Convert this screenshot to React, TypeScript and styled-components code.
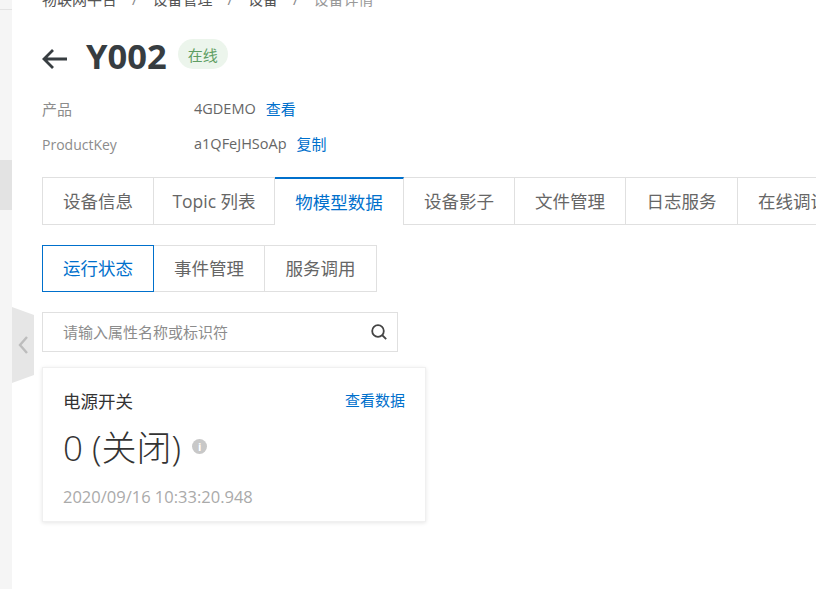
import styled, { createGlobalStyle } from "styled-components"

const FONT = `"Open Sans", "Noto Sans CJK SC", sans-serif`

const GlobalStyle = createGlobalStyle`
  html, body {
    margin: 0;
    height: 100%;
    overflow: hidden;
    background: #fff;
    font-family: ${FONT};
  }
  * { box-sizing: border-box; }
`

interface TabProps {
  $width: number;
  $first?: boolean;
  $active?: boolean;
}

const Page = styled.div`
  position: relative;
  display: flex;
  width: 816px;
  height: 589px;
  overflow: hidden;
`
const Sidebar = styled.div`
  flex: 0 0 12px;
  background: #f5f5f5;
  display: flex;
  flex-direction: column;
`
const SideLine = styled.div`
  height: 10px;
  border-bottom: 1px solid #e3e3e3;
  margin-bottom: 150px;
`
const SideActive = styled.div`
  height: 50px;
  background: #e3e3e3;
`
const Handle = styled.div`
  position: absolute;
  left: 12px;
  top: 307px;
  width: 22px;
  height: 76px;
  background: #e6e6e6;
  clip-path: polygon(0 0, 100% 8px, 100% 68px, 0 100%);
  display: flex;
  align-items: center;
  justify-content: center;
  color: #bdbdbd;
`
const Main = styled.div`
  flex: 1;
  min-width: 0;
  padding: 0 0 0 30px;
`
const Breadcrumb = styled.div`
  display: flex;
  height: 9px;
  align-items: flex-end;
  font-size: 15px;
  line-height: 20px;
  color: #555;
`
const Crumb = styled.span<{ $last?: boolean }>`
  color: ${p => (p.$last ? "#999" : "#555")};
  white-space: nowrap;
`
const Slash = styled.span`
  color: #888;
  margin: 0 15px;
`
const TitleRow = styled.div`
  display: flex;
  align-items: center;
  margin-top: 27px;
  height: 40px;
`
const BackIcon = styled.svg`
  width: 26px;
  height: 22px;
  margin-top: 6px;
  color: #373d41;
`
const Title = styled.h1`
  margin: 0 0 0 18px;
  font-size: 34.5px;
  line-height: 40px;
  font-weight: 700;
  color: #373d41;
`
const StatusPill = styled.span`
  margin: -4px 0 0 11px;
  width: 50px;
  height: 30px;
  border-radius: 15px;
  background: #ecf5ec;
  color: #5f9e63;
  font-size: 15px;
  display: flex;
  align-items: center;
  justify-content: center;
`
const Meta = styled.div`
  margin-top: 15px;
  display: grid;
  grid-template-columns: 152px 1fr;
  grid-auto-rows: 35px;
  font-size: 15px;
  align-items: center;
`
const MetaLabel = styled.span<{ $latin?: boolean }>`
  color: #8c8c8c;
  font-size: ${p => (p.$latin ? 14 : 15)}px;
  padding-top: ${p => (p.$latin ? 1 : 0)}px;
`
const MetaValue = styled.span`
  color: #666;
  display: flex;
  align-items: center;
  gap: 10px;
  font-size: 14.5px;
`
const LinkText = styled.span`
  color: #0070cc;
  font-size: 15px;
`
const Tabs = styled.div`
  display: flex;
  margin-top: 16px;
  height: 48px;
`
const Tab = styled.div<TabProps>`
  flex: 0 0 auto;
  width: ${p => p.$width}px;
  height: 48px;
  padding-bottom: 2px;
  border-right: 1px solid #e0e0e0;
  border-left: ${p => (p.$first ? "1px solid #e0e0e0" : "none")};
  border-top: ${p => (p.$active ? "2px solid #0070cc" : "1px solid #e0e0e0")};
  border-bottom: ${p => (p.$active ? "none" : "1px solid #e0e0e0")};
  color: ${p => (p.$active ? "#0070cc" : "#666")};
  font-size: 17.5px;
  display: flex;
  align-items: center;
  justify-content: center;
  white-space: nowrap;
`
const SubTabs = styled.div`
  display: flex;
  margin-top: 20px;
  height: 47px;
`
const SubTab = styled.div<TabProps>`
  width: ${p => p.$width}px;
  padding-bottom: 2px;
  border: 1px solid ${p => (p.$active ? "#0070cc" : "#e0e0e0")};
  border-left: ${p => (p.$active ? "1px solid #0070cc" : "none")};
  color: ${p => (p.$active ? "#0070cc" : "#666")};
  font-size: 17.5px;
  display: flex;
  align-items: center;
  justify-content: center;
`
const Search = styled.div`
  margin-top: 20px;
  width: 356px;
  height: 40px;
  border: 1px solid #e0e0e0;
  display: flex;
  align-items: center;
  justify-content: space-between;
  padding: 0 9px 2px 20px;
  font-size: 15px;
  color: #8c8c8c;
`
const SearchIcon = styled.svg`
  margin-top: 2px;
`
const Card = styled.div`
  margin-top: 15px;
  width: 384px;
  height: 155px;
  background: #fff;
  border: 1px solid #f0f0f0;
  box-shadow: 0 1px 4px rgba(0, 0, 0, 0.1);
  padding: 20px 20px 0 20px;
`
const CardHead = styled.div`
  display: flex;
  justify-content: space-between;
  align-items: center;
  height: 24px;
`
const CardTitle = styled.span`
  font-size: 17.5px;
  color: #333;
`
const CardLink = styled(LinkText)`
  margin-top: -2px;
`
const ValueRow = styled.div`
  display: flex;
  align-items: center;
  margin-top: 11px;
  height: 44px;
  font-size: 35px;
  font-weight: 300;
  color: #333;
`
const InfoDot = styled.span`
  width: 15px;
  height: 15px;
  margin-left: 11px;
  margin-top: 2px;
  border-radius: 50%;
  background: #c8c8c8;
  color: #fff;
  font-size: 11px;
  font-weight: 700;
  line-height: 15px;
  text-align: center;
`
const Time = styled.div`
  margin-top: 18px;
  font-size: 16.5px;
  color: #aaa;
`

const topTabs = [
  { label: "设备信息", width: 112, first: true },
  { label: "Topic 列表", width: 121 },
  { label: "物模型数据", width: 129, active: true },
  { label: "设备影子", width: 111 },
  { label: "文件管理", width: 111 },
  { label: "日志服务", width: 112 },
  { label: "在线调试", width: 111 },
]

const subTabs = [
  { label: "运行状态", width: 112, active: true },
  { label: "事件管理", width: 111 },
  { label: "服务调用", width: 112 },
]

const App = () => {
  return (
    <Page>
      <GlobalStyle />
      <Sidebar>
        <SideLine />
        <SideActive />
      </Sidebar>
      <Handle>
        <svg width="12" height="18" viewBox="0 0 12 18" fill="none" stroke="currentColor" strokeWidth="2.4">
          <path d="M10 1 3 9l7 8" />
        </svg>
      </Handle>
      <Main>
        <Breadcrumb>
          <Crumb>物联网平台</Crumb>
          <Slash>/</Slash>
          <Crumb>设备管理</Crumb>
          <Slash>/</Slash>
          <Crumb>设备</Crumb>
          <Slash>/</Slash>
          <Crumb $last>设备详情</Crumb>
        </Breadcrumb>
        <TitleRow>
          <BackIcon viewBox="0 0 26 22" fill="none" stroke="currentColor" strokeWidth="2.8">
            <path d="M25 11H2M11 2l-9 9 9 9" />
          </BackIcon>
          <Title>Y002</Title>
          <StatusPill>在线</StatusPill>
        </TitleRow>
        <Meta>
          <MetaLabel>产品</MetaLabel>
          <MetaValue>
            4GDEMO <LinkText>查看</LinkText>
          </MetaValue>
          <MetaLabel $latin>ProductKey</MetaLabel>
          <MetaValue>
            a1QFeJHSoAp <LinkText>复制</LinkText>
          </MetaValue>
        </Meta>
        <Tabs>
          {topTabs.map(t => (
            <Tab key={t.label} $width={t.width} $first={t.first} $active={t.active}>
              {t.label}
            </Tab>
          ))}
        </Tabs>
        <SubTabs>
          {subTabs.map(t => (
            <SubTab key={t.label} $width={t.width} $active={t.active}>
              {t.label}
            </SubTab>
          ))}
        </SubTabs>
        <Search>
          请输入属性名称或标识符
          <SearchIcon width="18" height="18" viewBox="0 0 18 18" fill="none" stroke="#444" strokeWidth="1.8">
            <circle cx="8" cy="8" r="5.8" />
            <path d="m12 12 4.2 4.2" />
          </SearchIcon>
        </Search>
        <Card>
          <CardHead>
            <CardTitle>电源开关</CardTitle>
            <CardLink>查看数据</CardLink>
          </CardHead>
          <ValueRow>
            0 (关闭)
            <InfoDot>i</InfoDot>
          </ValueRow>
          <Time>2020/09/16 10:33:20.948</Time>
        </Card>
      </Main>
    </Page>
  )
}

export default App
